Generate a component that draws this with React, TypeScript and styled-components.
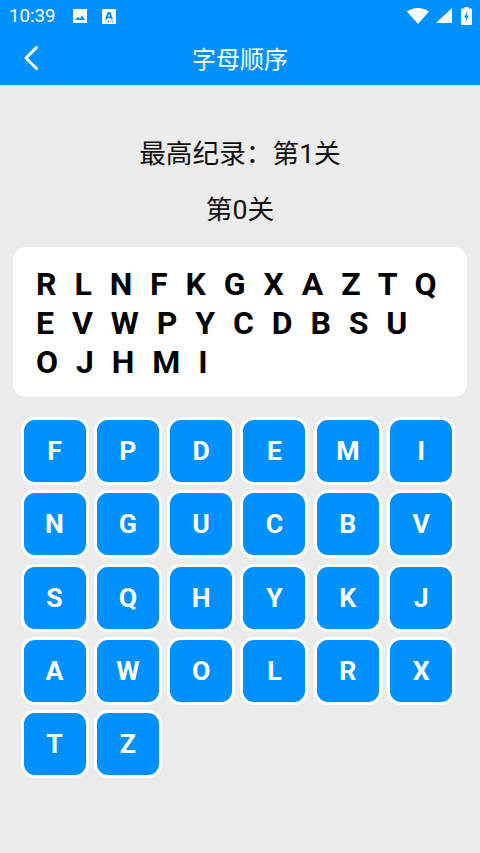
import React from 'react'
import styled, { createGlobalStyle } from 'styled-components'

const GlobalStyle = createGlobalStyle`
  html, body { margin: 0; padding: 0; background: #ececec; }
  body { font-family: Roboto, "Noto Sans CJK SC", sans-serif; }
`

const Page = styled.div`
  width: 480px;
  height: 853px;
  overflow: hidden;
  background: #ececec;
  display: flex;
  flex-direction: column;
`

const Header = styled.header`
  height: 85px;
  background: #0090ff;
  color: #fff;
  display: flex;
  flex-direction: column;
`

const StatusBar = styled.div`
  height: 32px;
  padding: 0 8px 0 9px;
  display: flex;
  align-items: center;
  font-size: 18.67px;
`

const Clock = styled.span`
  width: 63px;
`

const StatusIcon = styled.svg`
  display: block;
  margin-right: 14px;
`

const StatusRight = styled.div`
  margin-left: auto;
  display: flex;
  align-items: center;
  gap: 3px;
`

const TitleBar = styled.div`
  flex: 1;
  position: relative;
  display: flex;
  align-items: center;
  justify-content: center;
  padding-bottom: 2px;
`

const BackIcon = styled.svg`
  position: absolute;
  left: 21px;
  top: 13px;
`

const Title = styled.h1`
  margin: 0;
  font-size: 24px;
  font-weight: 400;
  font-family: Roboto, "Noto Sans CJK SC", sans-serif;
`

const Score = styled.div<{ $top: number }>`
  margin-top: ${p => p.$top}px;
  text-align: center;
  font-size: 26.67px;
  line-height: 36px;
  color: #111;
`

const LetterCard = styled.div`
  margin: 19px 13px 0;
  padding: 18px 25px 14px 23px;
  height: 150px;
  box-sizing: border-box;
  background: #fff;
  border-radius: 13px;
  font-size: 32px;
  font-weight: 700;
  line-height: 39px;
  word-spacing: 1px;
  color: #000;
  white-space: pre-wrap;
`

const KeyGrid = styled.div`
  margin: 20px 0 0 20.5px;
  width: 440px;
  display: grid;
  grid-template-columns: repeat(6, 68px);
  grid-auto-rows: 68px;
  column-gap: 5.33px;
  row-gap: 5.33px;
`

const Key = styled.button`
  box-sizing: border-box;
  padding: 0;
  border: 3px solid #fff;
  border-radius: 14px;
  background: #0090ff;
  color: #fff;
  font-family: Roboto, sans-serif;
  font-size: 26.67px;
  font-weight: 700;
`

const sequence = 'RLNFKGXAZTQEVWPYCDBSUOJHMI'.split('')
const keys = 'FPDEMINGUCBVSQHYKJAWOLRXTZ'.split('')

export default function App() {
  return (
    <Page>
      <GlobalStyle />
      <Header>
        <StatusBar>
          <Clock>10:39</Clock>
          <StatusIcon width="16" height="16" viewBox="0 0 16 16">
            <path fill="#fff" fillRule="evenodd" d="M1.5 1h13a.5.5 0 0 1 .5.5v13a.5.5 0 0 1-.5.5h-13a.5.5 0 0 1-.5-.5v-13a.5.5 0 0 1 .5-.5ZM3 12h10L10.2 7.5 8 10.5 6.2 8.8Z" />
          </StatusIcon>
          <StatusIcon width="14" height="15" viewBox="0 0 14 15">
            <path fill="#fff" fillRule="evenodd" d="M1 0h12a1 1 0 0 1 1 1v13a1 1 0 0 1-1 1H1a1 1 0 0 1-1-1V1a1 1 0 0 1 1-1Zm4.7 3L3 10.500h2l.5-1.500h3l.5 1.500h2L8.300 3ZM6 7.400 7 4.800l1 2.600ZM8 12h1v1H8Zm2 0h1v1h-1Zm-4 0h1v1H6Z" />
          </StatusIcon>
          <StatusRight>
            <svg width="22" height="16" viewBox="0 0 22 16">
              <path fill="#fff" d="M0 3.500C3 1.200 7 0 11 0s8 1.200 11 3.500L11 16Z" />
            </svg>
            <svg width="17" height="16" viewBox="0 0 17 16" style={{ marginLeft: 3 }}>
              <path fill="#fff" d="M17 0v15H1Z" />
            </svg>
            <svg width="11" height="18" viewBox="0 0 11 18" style={{ marginLeft: 6 }}>
              <path fill="#fff" fillRule="evenodd" d="M3.500 0h4v1.500H10a1 1 0 0 1 1 1V17a1 1 0 0 1-1 1H1a1 1 0 0 1-1-1V2.500a1 1 0 0 1 1-1h2.500ZM6.500 4 3 10.500h2.200L4.500 15 8 8.500H5.800Z" />
            </svg>
          </StatusRight>
        </StatusBar>
        <TitleBar>
          <BackIcon width="20" height="26" viewBox="0 0 20 26">
            <path d="M15.500 2.500 5 13l10.500 10.500" fill="none" stroke="#fff" strokeWidth="3" strokeLinecap="round" strokeLinejoin="round" />
          </BackIcon>
          <Title>字母顺序</Title>
        </TitleBar>
      </Header>
      <Score $top={51}>最高纪录：第1关</Score>
      <Score $top={20}>第0关</Score>
      <LetterCard>{sequence.map(l => l + '  ').join('')}</LetterCard>
      <KeyGrid>
        {keys.map(k => (
          <Key key={k}>{k}</Key>
        ))}
      </KeyGrid>
    </Page>
  )
}
